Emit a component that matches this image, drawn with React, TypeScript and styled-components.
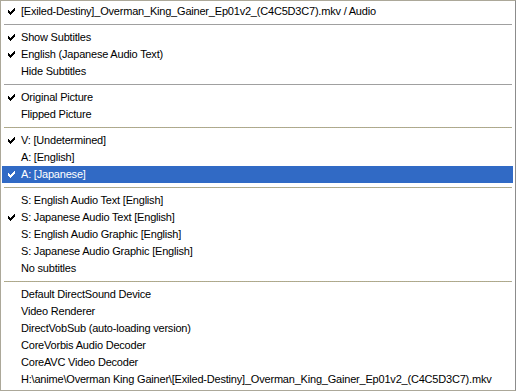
import styled, { createGlobalStyle } from "styled-components"

const GlobalStyle = createGlobalStyle`
    html, body {
        margin: 0;
        padding: 0;
        background: #ffffff;
    }
`

type Entry =
    | { kind: "item"; label: string; checked?: boolean; selected?: boolean }
    | { kind: "sep"; dotted?: boolean }

const entries: Entry[] = [
    { kind: "item", label: "[Exiled-Destiny]_Overman_King_Gainer_Ep01v2_(C4C5D3C7).mkv / Audio", checked: true },
    { kind: "sep" },
    { kind: "item", label: "Show Subtitles", checked: true },
    { kind: "item", label: "English (Japanese Audio Text)", checked: true },
    { kind: "item", label: "Hide Subtitles" },
    { kind: "sep" },
    { kind: "item", label: "Original Picture", checked: true },
    { kind: "item", label: "Flipped Picture" },
    { kind: "sep", dotted: true },
    { kind: "item", label: "V: [Undetermined]", checked: true },
    { kind: "item", label: "A: [English]" },
    { kind: "item", label: "A: [Japanese]", checked: true, selected: true },
    { kind: "sep", dotted: true },
    { kind: "item", label: "S: English Audio Text [English]" },
    { kind: "item", label: "S: Japanese Audio Text [English]", checked: true },
    { kind: "item", label: "S: English Audio Graphic [English]" },
    { kind: "item", label: "S: Japanese Audio Graphic [English]" },
    { kind: "item", label: "No subtitles" },
    { kind: "sep", dotted: true },
    { kind: "item", label: "Default DirectSound Device" },
    { kind: "item", label: "Video Renderer" },
    { kind: "item", label: "DirectVobSub (auto-loading version)" },
    { kind: "item", label: "CoreVorbis Audio Decoder" },
    { kind: "item", label: "CoreAVC Video Decoder" },
    { kind: "item", label: "H:\\anime\\Overman King Gainer\\[Exiled-Destiny]_Overman_King_Gainer_Ep01v2_(C4C5D3C7).mkv" },
]

// classic 7x7 menu check mark, one rect per pixel
const CHECK_ROWS = [
    "......X",
    ".....XX",
    "X...XXX",
    "XX.XXX.",
    "XXXXX..",
    ".XXX...",
    "..X....",
]

function CheckMark({ color }: { color: string }) {
    return (
        <svg width="7" height="7" viewBox="0 0 7 7" shapeRendering="crispEdges">
            {CHECK_ROWS.map((row, y) =>
                row.split("").map((c, x) =>
                    c === "X" ? <rect key={`${x}-${y}`} x={x} y={y} width="1" height="1" fill={color} /> : null
                )
            )}
        </svg>
    )
}

function App() {
    return (
        <>
            <GlobalStyle />
            <Menu>
                {entries.map((e, i) =>
                    e.kind === "sep" ? (
                        <Separator key={i} $dotted={e.dotted} />
                    ) : (
                        <Item key={i} $selected={e.selected}>
                            <CheckSlot>
                                {e.checked && <CheckMark color={e.selected ? "#ffffff" : "#000000"} />}
                            </CheckSlot>
                            <Label>{e.label}</Label>
                        </Item>
                    )
                )}
            </Menu>
        </>
    )
}

export default App

const Menu = styled.div`
    width: 516px;
    height: 391px;
    box-sizing: border-box;
    background: #ffffff;
    border: 1px solid #aca899;
    border-right-color: #8c8c8c;
    padding: 2px 2px 2px 1px;
    display: flex;
    flex-direction: column;
    font-family: "Liberation Sans", Arial, sans-serif;
    font-size: 11px;
    letter-spacing: -0.2px;
    color: #000000;
`

const Item = styled.div<{ $selected?: boolean }>`
    height: 17px;
    flex: none;
    display: flex;
    align-items: center;
    padding-left: 6px;
    background: ${(p) => (p.$selected ? "#316ac5" : "transparent")};
    color: ${(p) => (p.$selected ? "#ffffff" : "#000000")};
    white-space: nowrap;
`

const CheckSlot = styled.span`
    width: 13px;
    flex: none;
    display: flex;
    align-items: center;
`

const Label = styled.span`
    line-height: 17px;
`

const Separator = styled.div<{ $dotted?: boolean }>`
    height: 9px;
    flex: none;
    display: flex;
    align-items: center;
    padding: 0 1px 0 2px;

    &::after {
        content: "";
        flex: 1;
        height: 1px;
        background: ${(p) =>
            p.$dotted
                ? "repeating-linear-gradient(90deg, #b4ac7c 0 1px, #a8a8a0 1px 2px)"
                : "#a0a0a0"};
    }
`
